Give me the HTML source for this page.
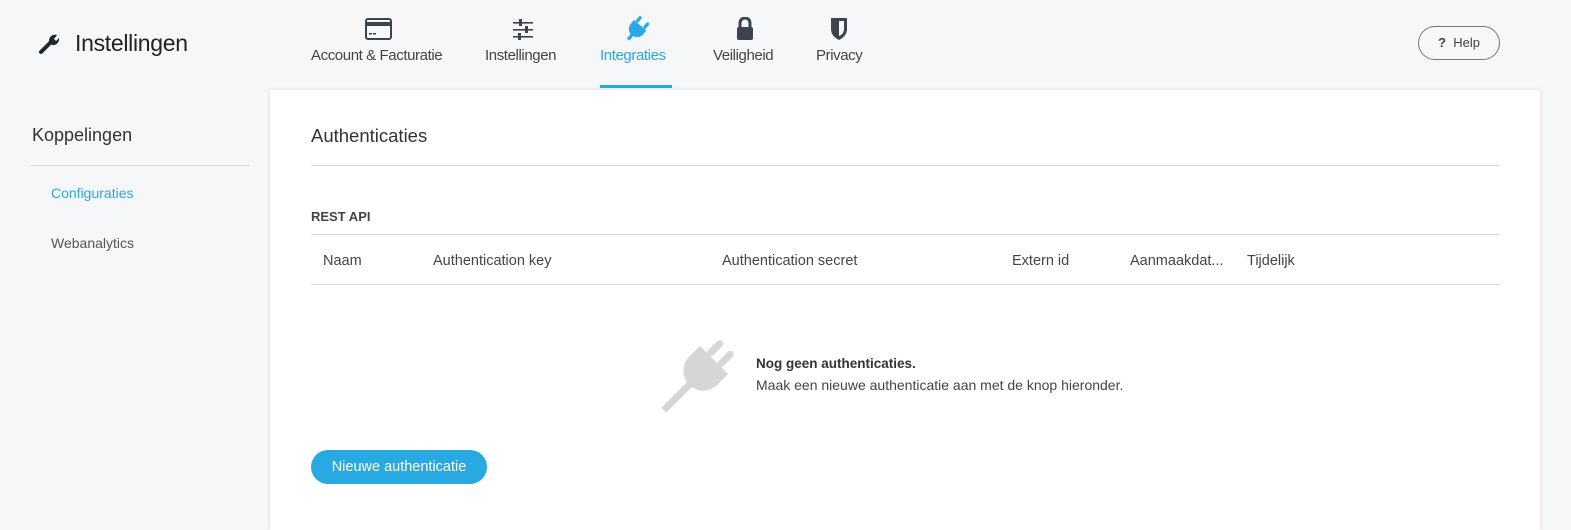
<!DOCTYPE html>
<html><head><meta charset="utf-8"><style>
*{margin:0;padding:0;box-sizing:border-box}
body{width:1571px;height:525px;overflow:hidden;background:#f6f7f8;font-family:"Liberation Sans",sans-serif;color:#444;position:relative}
.abs{position:absolute}
.title{left:75px;top:30px;font-size:23px;color:#222;letter-spacing:-0.3px}
.nav{top:47px;font-size:15px;color:#444;letter-spacing:-0.4px}
.card{left:270px;top:90px;width:1270px;height:440px;background:#fff;box-shadow:0 0 4px rgba(0,0,0,.12)}
.help{left:1418px;top:26px;width:82px;height:34px;border:1px solid #777;border-radius:17px;font-size:13px;color:#444;text-align:center;line-height:32px}
.th{top:253px;font-size:14.5px;color:#444}
</style></head><body>
<svg class="abs" style="left:38px;top:33px" width="24" height="22" viewBox="0 0 24 22"><path d="M3 19 L12 10" stroke="#1d2733" stroke-width="4" stroke-linecap="round"/><path d="M11 8 A6 6 0 0 1 19 2 L16 6 L18 8 L21 5 A6 6 0 0 1 14 12 Z" fill="#1d2733"/></svg>
<div class="abs title">Instellingen</div>

<svg class="abs" style="left:365px;top:18px" width="27" height="22" viewBox="0 0 27 22"><rect x="1" y="1" width="25" height="20" rx="2" fill="none" stroke="#3d4450" stroke-width="2"/><rect x="1" y="4" width="25" height="4" fill="#3d4450"/><rect x="4" y="15" width="3" height="1.5" fill="#3d4450"/><rect x="8" y="15" width="3" height="1.5" fill="#3d4450"/></svg>
<div class="abs nav" style="left:311px">Account &amp; Facturatie</div>
<svg class="abs" style="left:512px;top:19px" width="22" height="22" viewBox="0 0 22 22" fill="#3d4450"><rect x="1" y="3" width="20" height="1.6"/><rect x="7" y="0" width="3" height="7"/><rect x="1" y="10" width="20" height="1.6"/><rect x="13" y="7" width="3" height="7"/><rect x="1" y="17" width="20" height="1.6"/><rect x="6" y="14" width="3" height="7"/></svg>
<div class="abs nav" style="left:485px">Instellingen</div>
<svg class="abs" style="left:624px;top:16px" width="26" height="26" viewBox="-16 -16 32 32"><g transform="rotate(40)" fill="#29a9e1"><rect x="-8" y="-15" width="4" height="9" rx="2"/><rect x="4" y="-15" width="4" height="9" rx="2"/><path d="M-10,-6 H10 V0 A10,10 0 0 1 -10,0 Z"/><rect x="-2" y="5" width="4" height="12"/></g></svg>
<div class="abs nav" style="left:600px;color:#29a9e1">Integraties</div>
<div class="abs" style="left:600px;top:85px;width:72px;height:3px;background:#29a9e1"></div>
<svg class="abs" style="left:736px;top:17px" width="18" height="23" viewBox="0 0 18 23"><path d="M4 10 V6 A5 5 0 0 1 14 6 V10" fill="none" stroke="#3d4450" stroke-width="3"/><rect x="1" y="10" width="16" height="13" rx="2" fill="#3d4450"/></svg>
<div class="abs nav" style="left:713px">Veiligheid</div>
<svg class="abs" style="left:830px;top:17px" width="18" height="23" viewBox="0 0 18 23"><path d="M1 1 H17 V12 Q17 19 9 23 Q1 19 1 12 Z" fill="#3d4450"/><path d="M9 4 H14 V12 Q14 17 9 19 Z" fill="#f6f7f8"/></svg>
<div class="abs nav" style="left:816px">Privacy</div>

<div class="abs help"><b>?</b>&nbsp; Help</div>

<div class="abs" style="left:32px;top:125px;font-size:18px;color:#333">Koppelingen</div>
<div class="abs" style="left:31px;top:165px;width:219px;height:1px;background:#d8d8d8"></div>
<div class="abs" style="left:51px;top:185px;font-size:14px;color:#29a9e1">Configuraties</div>
<div class="abs" style="left:51px;top:235px;font-size:14px;color:#555">Webanalytics</div>

<div class="abs card"></div>
<div class="abs" style="left:311px;top:125px;font-size:18.5px;color:#333">Authenticaties</div>
<div class="abs" style="left:311px;top:165px;width:1189px;height:1px;background:#d8d8d8"></div>
<div class="abs" style="left:311px;top:209px;font-size:13px;font-weight:bold;color:#444">REST API</div>
<div class="abs" style="left:311px;top:234px;width:1189px;height:1px;background:#d8d8d8"></div>
<div class="abs th" style="left:323px">Naam</div>
<div class="abs th" style="left:433px">Authentication key</div>
<div class="abs th" style="left:722px">Authentication secret</div>
<div class="abs th" style="left:1012px">Extern id</div>
<div class="abs th" style="left:1130px">Aanmaakdat...</div>
<div class="abs th" style="left:1247px">Tijdelijk</div>
<div class="abs" style="left:311px;top:284px;width:1189px;height:1px;background:#d8d8d8"></div>

<svg class="abs" style="left:660px;top:330px" width="84" height="84" viewBox="-42 -42 84 84"><g transform="rotate(45)" fill="#d6d6d6"><rect x="-11" y="-36" width="7" height="20" rx="3.5"/><rect x="4" y="-36" width="7" height="20" rx="3.5"/><path d="M-20,-17 H20 V-2 A20,20 0 0 1 -20,-2 Z"/><rect x="-3.5" y="14" width="7" height="40"/></g></svg>
<div class="abs" style="left:756px;top:356px;font-size:13.5px;font-weight:bold;color:#333">Nog geen authenticaties.</div>
<div class="abs" style="left:756px;top:377px;font-size:14px;color:#444">Maak een nieuwe authenticatie aan met de knop hieronder.</div>

<div class="abs" style="left:311px;top:450px;width:176px;height:34px;border-radius:17px;background:#29a9e1;color:#fff;font-size:14.5px;text-align:center;line-height:34px">Nieuwe authenticatie</div>
</body></html>
